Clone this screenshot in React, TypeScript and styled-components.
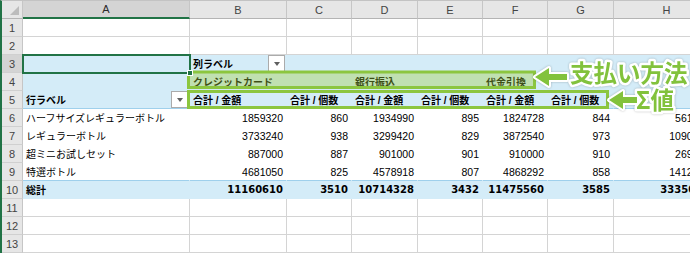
import React from "react";
import styled, { createGlobalStyle, css } from "styled-components";

type Tone = "plain" | "blue" | "white";

type CellSpec = {
  text?: string;
  tone: Tone;
  bold?: boolean;
  num?: boolean;
  filter?: boolean;
  rule?: boolean;
  selected?: boolean;
};

const TONE_BG: Record<Tone, string> = {
  plain: "#ffffff",
  blue: "#d4ecf8",
  white: "#ffffff",
};

const COL_WIDTHS = [21, 167, 97, 65, 66, 65, 65, 66, 106];
const LETTERS = ["A", "B", "C", "D", "E", "F", "G", "H"];
const GREEN = "#217346";
const MARK = "#82c23c";

const GlobalStyle = createGlobalStyle`
  html, body {
    margin: 0;
    padding: 0;
    background: #ffffff;
    overflow: hidden;
  }
  body {
    font-family: "Liberation Sans", "Noto Sans CJK JP", sans-serif;
  }
`;

const Page = styled("div")`
  position: relative;
  width: 690px;
  height: 253px;
  overflow: hidden;
`;

const Sheet = styled("div")`
  display: grid;
  grid-template-columns: ${COL_WIDTHS.map((w) => w + "px").join(" ")};
  grid-auto-rows: 18px;
  width: max-content;
  border-left: 2px solid ${GREEN};
  border-top: 1px solid #c3c3c3;
`;

const Corner = styled("div")`
  box-sizing: border-box;
  display: flex;
  align-items: flex-end;
  justify-content: flex-end;
  padding: 0 3px 3px 0;
  background: #e6e6e6;
  border-right: 1px solid #c6c6c6;
  border-bottom: 1px solid #b4b4b4;

  &::after {
    content: "";
    width: 0;
    height: 0;
    border-left: 9px solid transparent;
    border-bottom: 9px solid #bcbcbc;
  }
`;

const ColHead = styled("div")<{ $selected?: boolean }>`
  box-sizing: border-box;
  display: flex;
  align-items: center;
  justify-content: center;
  font-size: 11px;
  color: ${(p) => (p.$selected ? "#2a2a2a" : "#444444")};
  background: ${(p) => (p.$selected ? "#d4d4d4" : "#e6e6e6")};
  border-right: 1px solid #c6c6c6;
  border-bottom: ${(p) => (p.$selected ? `2px solid ${GREEN}` : "1px solid #b4b4b4")};
`;

const RowHead = styled("div")<{ $selected?: boolean }>`
  box-sizing: border-box;
  display: flex;
  align-items: center;
  justify-content: center;
  font-size: 11px;
  color: #444444;
  background: ${(p) => (p.$selected ? "#d4d4d4" : "#e6e6e6")};
  border-right: 1px solid ${(p) => (p.$selected ? GREEN : "#c6c6c6")};
  border-bottom: 1px solid #d0d0d0;
`;

const Cell = styled("div")<{
  $tone: Tone;
  $bold?: boolean;
  $num?: boolean;
  $rule?: boolean;
  $selected?: boolean;
}>`
  position: relative;
  box-sizing: border-box;
  display: flex;
  align-items: center;
  justify-content: ${(p) => (p.$num ? "flex-end" : "space-between")};
  padding: 0 ${(p) => (p.$num ? "3px" : "1px")} 0 3px;
  white-space: nowrap;
  color: #000000;
  background: ${(p) => TONE_BG[p.$tone]};
  font-weight: ${(p) => (p.$bold ? 700 : 400)};
  font-family: ${(p) =>
    p.$num && p.$bold
      ? '"DejaVu Sans", sans-serif'
      : '"Liberation Sans", "Noto Sans CJK JP", sans-serif'};
  font-size: ${(p) => (p.$num ? (p.$bold ? "10px" : "10.5px") : "10px")};
  border-right: 1px solid
    ${(p) => (p.$tone === "plain" ? "#d4d4d4" : TONE_BG[p.$tone])};
  border-bottom: 1px solid
    ${(p) =>
      p.$rule ? "#9fd0ec" : p.$tone === "plain" ? "#d4d4d4" : TONE_BG[p.$tone]};

  ${(p) =>
    p.$selected &&
    css`
      z-index: 1;
      outline: 2px solid ${GREEN};
      outline-offset: -1px;

      &::after {
        content: "";
        position: absolute;
        right: -4px;
        bottom: -4px;
        width: 4px;
        height: 4px;
        background: ${GREEN};
        border: 1px solid #ffffff;
      }
    `}
`;

const CellText = styled("span")`
  overflow: visible;
`;

const FilterButton = styled("span")`
  box-sizing: border-box;
  flex-shrink: 0;
  width: 17px;
  height: 17px;
  display: flex;
  align-items: center;
  justify-content: center;
  background: #ffffff;
  border: 1px solid #ababab;

  &::before {
    content: "";
    width: 0;
    height: 0;
    border-left: 3.5px solid transparent;
    border-right: 3.5px solid transparent;
    border-top: 4px solid #606060;
  }
`;

const Annotation = styled("svg")`
  position: absolute;
  top: 0;
  left: 0;
  pointer-events: none;
`;

const CalloutText = styled("text")`
  font-family: "Noto Sans CJK JP", sans-serif;
  font-weight: 700;
  font-size: 23.5px;
  fill: ${MARK};
  stroke: #ffffff;
  stroke-width: 5px;
  stroke-linejoin: round;
  paint-order: stroke;
`;

const products = [
  ["ハーフサイズレギュラーボトル", "1859320", "860", "1934990", "895", "1824728", "844", "5619038"],
  ["レギュラーボトル", "3733240", "938", "3299420", "829", "3872540", "973", "10905200"],
  ["超ミニお試しセット", "887000", "887", "901000", "901", "910000", "910", "2698000"],
  ["特選ボトル", "4681050", "825", "4578918", "807", "4868292", "858", "14128260"],
];
const totals = ["総計", "11160610", "3510", "10714328", "3432", "11475560", "3585", "33350498"];

function plainRow(): CellSpec[] {
  return LETTERS.map(() => ({ tone: "plain" as Tone }));
}

function buildRows(): CellSpec[][] {
  const blue = (text?: string, extra: Partial<CellSpec> = {}): CellSpec => ({
    tone: "blue",
    text,
    bold: !!text,
    ...extra,
  });

  const row3 = [
    blue(undefined, { selected: true }),
    blue("列ラベル", { filter: true }),
    ...Array.from({ length: 6 }, () => blue()),
  ];
  const row4 = [
    blue(),
    blue("クレジットカード"),
    blue(),
    blue("銀行振込"),
    blue(),
    blue("代金引換"),
    blue(),
    blue(),
  ];
  const row5 = [
    blue("行ラベル", { filter: true, rule: true }),
    ...["合計 / 金額", "合計 / 個数", "合計 / 金額", "合計 / 個数", "合計 / 金額", "合計 / 個数"].map((t) =>
      blue(t, { rule: true })
    ),
    blue(undefined, { rule: true }),
  ];
  const body = products.map((p, i) =>
    p.map((v, c) => ({
      tone: "white" as Tone,
      text: v,
      num: c > 0,
      rule: i === products.length - 1,
    }))
  );
  const total = totals.map((v, c) => blue(v, { num: c > 0 }));

  return [plainRow(), plainRow(), row3, row4, row5, ...body, total, plainRow(), plainRow(), plainRow()];
}

function arrowPath(tip: number, y: number, base: number, end: number, head: number, shaft: number) {
  return `M${tip} ${y} L${base} ${y - head} L${base} ${y - shaft} L${end} ${y - shaft} L${end} ${y + shaft} L${base} ${y + shaft} L${base} ${y + head} Z`;
}

export default function App() {
  const rows = buildRows();

  return (
    <Page>
      <GlobalStyle />
      <Sheet>
        <Corner />
        {LETTERS.map((l) => (
          <ColHead key={l} $selected={l === "A"}>
            {l}
          </ColHead>
        ))}
        {rows.map((row, r) => (
          <React.Fragment key={r}>
            <RowHead $selected={r === 2}>{r + 1}</RowHead>
            {row.map((cell, c) => (
              <Cell
                key={c}
                $tone={cell.tone}
                $bold={cell.bold}
                $num={cell.num}
                $rule={cell.rule}
                $selected={cell.selected}
              >
                {cell.text && <CellText>{cell.text}</CellText>}
                {cell.filter && <FilterButton />}
              </Cell>
            ))}
          </React.Fragment>
        ))}
      </Sheet>

      {/* annotation marks drawn over the sheet */}
      <Annotation width={690} height={253} viewBox="0 0 690 253">
        <rect x={188.5} y={72} width={346} height={15.5} fill="rgba(160,205,60,0.38)" stroke="#8cc63f" strokeWidth={3} />
        <rect x={188.5} y={91.5} width={419} height={16} fill="none" stroke="#8cc63f" strokeWidth={3} />
        <g style={{ filter: "drop-shadow(0 0 1px rgba(0,0,0,0.25))" }}>
          <path
            d={arrowPath(535, 77, 549, 567, 9, 3)}
            fill={MARK}
            stroke="#ffffff"
            strokeWidth={4}
            strokeLinejoin="round"
            style={{ paintOrder: "stroke" }}
          />
          <CalloutText x={570} y={82}>支払い方法</CalloutText>
          <path
            d={arrowPath(609, 100, 623, 637, 9, 3)}
            fill={MARK}
            stroke="#ffffff"
            strokeWidth={4}
            strokeLinejoin="round"
            style={{ paintOrder: "stroke" }}
          />
          <CalloutText x={636} y={109}>Σ値</CalloutText>
        </g>
      </Annotation>
    </Page>
  );
}
